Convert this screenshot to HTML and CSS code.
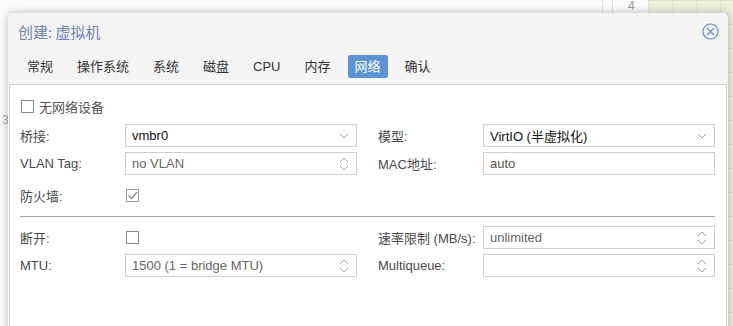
FILE: index.html
```html
<!DOCTYPE html>
<html lang="zh">
<head>
<meta charset="utf-8">
<title>创建: 虚拟机</title>
<link rel="stylesheet" href="styles.css">
</head>
<body>
<div class="desktop">
  <div class="bg-grid"></div>
  <div class="bg-line bg-line-a"></div>
  <div class="bg-line bg-line-b"></div>
  <span class="bg-text bg-four">4</span>
  <span class="bg-text bg-three">3</span>

  <div class="window">
    <div class="header">
      <span class="title">创建: 虚拟机</span>
      <svg class="close" width="17" height="17" viewBox="0 0 17 17">
        <circle cx="8.5" cy="8.5" r="7.5" fill="none" stroke="#5b8fd4" stroke-width="1.2"/>
        <path d="M5 5 L12 12 M12 5 L5 12" stroke="#5b8fd4" stroke-width="1.2" fill="none"/>
      </svg>
    </div>
    <div class="tabs">
      <span class="tab">常规</span>
      <span class="tab">操作系统</span>
      <span class="tab">系统</span>
      <span class="tab">磁盘</span>
      <span class="tab">CPU</span>
      <span class="tab">内存</span>
      <span class="tab active">网络</span>
      <span class="tab">确认</span>
    </div>
    <div class="panel">
      <div class="nodev">
        <span class="cb"></span>
        <span class="cb-label">无网络设备</span>
      </div>
      <div class="grid grid-top">
        <div class="col">
          <div class="row">
            <span class="label">桥接:</span>
            <div class="field"><span class="val dark">vmbr0</span><svg class="chev" width="10" height="6" viewBox="0 0 10 6"><path d="M1 1 L5 5 L9 1" fill="none" stroke="#a0a0a0" stroke-width="1"/></svg></div>
          </div>
          <div class="row">
            <span class="label">VLAN Tag:</span>
            <div class="field"><span class="val muted">no VLAN</span><svg class="spin" width="10" height="16" viewBox="0 0 10 16"><path d="M1 6 L5 2 L9 6 M1 10 L5 14 L9 10" fill="none" stroke="#a0a0a0" stroke-width="1"/></svg></div>
          </div>
          <div class="row cbrow">
            <span class="label">防火墙:</span>
            <span class="cb checked"><svg width="11" height="11" viewBox="0 0 11 11"><path d="M1.5 5.5 L4.5 8.5 L10 2" fill="none" stroke="#888" stroke-width="1.2"/></svg></span>
          </div>
        </div>
        <div class="col">
          <div class="row">
            <span class="label">模型:</span>
            <div class="field"><span class="val dark">VirtIO (半虚拟化)</span><svg class="chev" width="10" height="6" viewBox="0 0 10 6"><path d="M1 1 L5 5 L9 1" fill="none" stroke="#a0a0a0" stroke-width="1"/></svg></div>
          </div>
          <div class="row">
            <span class="label">MAC地址:</span>
            <div class="field"><span class="val">auto</span></div>
          </div>
        </div>
      </div>
      <div class="sep"></div>
      <div class="grid">
        <div class="col">
          <div class="row cbrow2">
            <span class="label">断开:</span>
            <span class="cb"></span>
          </div>
          <div class="row">
            <span class="label">MTU:</span>
            <div class="field"><span class="val muted">1500 (1 = bridge MTU)</span><svg class="spin" width="10" height="16" viewBox="0 0 10 16"><path d="M1 6 L5 2 L9 6 M1 10 L5 14 L9 10" fill="none" stroke="#a0a0a0" stroke-width="1"/></svg></div>
          </div>
        </div>
        <div class="col">
          <div class="row">
            <span class="label">速率限制 (MB/s):</span>
            <div class="field"><span class="val muted">unlimited</span><svg class="spin" width="10" height="16" viewBox="0 0 10 16"><path d="M1 6 L5 2 L9 6 M1 10 L5 14 L9 10" fill="none" stroke="#a0a0a0" stroke-width="1"/></svg></div>
          </div>
          <div class="row">
            <span class="label">Multiqueue:</span>
            <div class="field"><span class="val muted"></span><svg class="spin" width="10" height="16" viewBox="0 0 10 16"><path d="M1 6 L5 2 L9 6 M1 10 L5 14 L9 10" fill="none" stroke="#a0a0a0" stroke-width="1"/></svg></div>
          </div>
        </div>
      </div>
    </div>
  </div>
</div>
</body>
</html>
```

FILE: styles.css
```css
* { box-sizing: border-box; }
html, body { margin: 0; padding: 0; }
body {
  font-family: "Liberation Sans", "Noto Sans CJK SC", sans-serif;
  font-size: 13px;
  color: #333;
  background: #fbfbfb;
}
.desktop {
  position: relative;
  width: 733px;
  height: 326px;
  overflow: hidden;
  background: #fbfbfb;
}
.bg-grid {
  position: absolute;
  left: 648px;
  top: 0;
  width: 85px;
  height: 326px;
  background-color: #eef0dc;
  background-image:
    linear-gradient(#e2e4cf 1px, transparent 1px),
    linear-gradient(90deg, #e2e4cf 1px, transparent 1px);
  background-size: 24px 24px;
}
.bg-line { position: absolute; top: 0; width: 1px; height: 326px; background: #dedede; }
.bg-line-a { left: 602px; }
.bg-line-b { left: 612px; }
.bg-text { position: absolute; color: #999; font-size: 12px; line-height: 12px; }
.bg-four { left: 628px; top: 0; }
.bg-three { left: 2px; top: 114px; color: #aaa; font-size: 12px; }

.window {
  position: absolute;
  left: 8px;
  top: 13px;
  width: 720px;
  height: 330px;
  background: #f4f4f4;
  border-radius: 5px 5px 0 0;
  box-shadow: 0 0 9px rgba(0, 0, 0, 0.28);
  display: flex;
  flex-direction: column;
}
.header {
  height: 36px;
  display: flex;
  align-items: center;
  justify-content: space-between;
  padding: 0 10px 0 10px;
}
.title {
  font-family: "Noto Sans CJK SC", sans-serif;
  font-size: 15px;
  color: #7182b5;
  line-height: 20px;
  padding-top: 1px;
}
.close { display: block; margin-right: -1px; margin-top: 1px; }

.tabs {
  height: 35px;
  display: flex;
  gap: 10px;
  padding: 6px 0 0 12px;
}
.tab {
  height: 23px;
  line-height: 23px;
  padding: 0 7px;
  border-radius: 2px;
  color: #333;
  font-family: "Liberation Sans", "Noto Sans CJK SC", sans-serif;
  font-size: 13px;
}
.tab.active { background: #5b93d3; color: #fff; }

.panel {
  flex: 1;
  margin: 0 1px;
  background: #fff;
  border: 1px solid #d0d0d0;
  border-bottom: none;
  padding: 10px 11px 0 10px;
}
.nodev {
  height: 22px;
  display: flex;
  align-items: center;
  gap: 5px;
  padding-left: 1px;
}
.cb {
  width: 13px;
  height: 13px;
  border: 1px solid #8a8a8a;
  background: #fff;
  display: inline-flex;
  align-items: center;
  justify-content: center;
  flex: none;
}
.cb.checked { border-color: #999; }
.cb svg { display: block; }
.cb-label { color: #555; font-family: "Noto Sans CJK SC", sans-serif; }

.grid {
  display: grid;
  grid-template-columns: 337px 337px;
  column-gap: 21px;
}
.grid-top { margin-top: 7px; }
.col { display: flex; flex-direction: column; gap: 5px; }
.row {
  display: flex;
  align-items: center;
  height: 23px;
}
.label {
  width: 105px;
  flex: none;
  color: #4a4a4a;
  font-family: "Liberation Sans", "Noto Sans CJK SC", sans-serif;
}
.field {
  flex: 1;
  height: 23px;
  border: 1px solid #cfcfcf;
  display: flex;
  align-items: center;
  justify-content: space-between;
  padding: 0 7px 0 6px;
  background: #fff;
}
.val { color: #555; font-family: "Liberation Sans", "Noto Sans CJK SC", sans-serif; white-space: nowrap; }
.val.dark { color: #111; }
.val.muted { color: #666; }
.chev { display: block; }
.spin { display: block; }
.cbrow { height: 26px; padding-top: 4px; }
.cbrow .cb { margin-left: 1px; }
.cbrow2 .cb { margin-left: 1px; }

.sep {
  height: 1px;
  background: #a4a4a4;
  margin: 10px 0 9px 0;
}
```
